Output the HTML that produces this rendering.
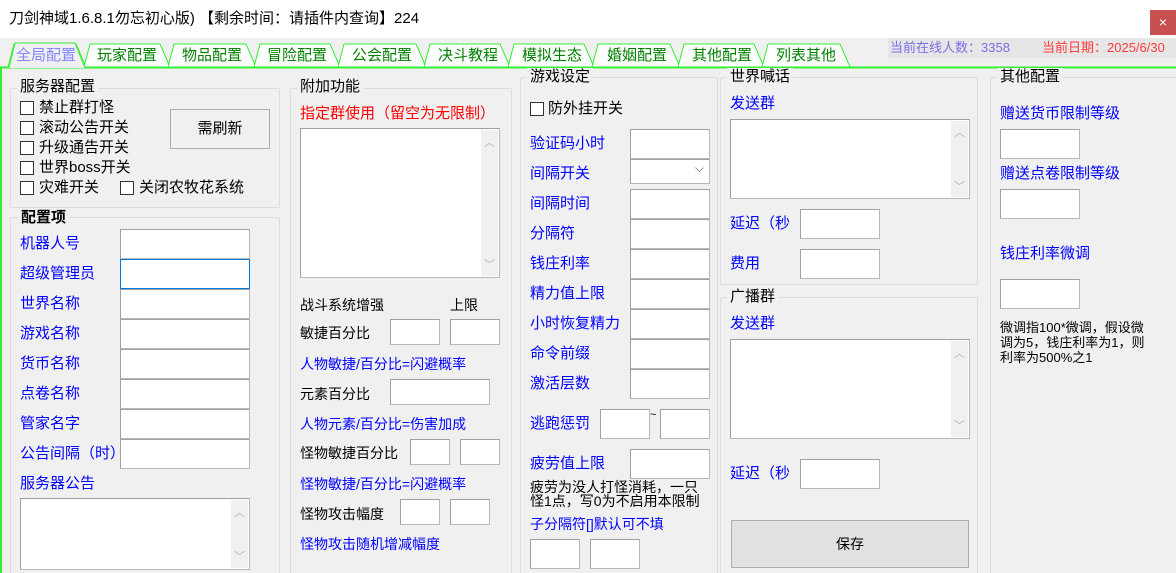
<!DOCTYPE html>
<html style="overflow:hidden"><head><meta charset="utf-8"><style>
*{margin:0;padding:0;box-sizing:border-box}
html,body{width:1176px;height:573px;overflow:hidden}
body{background:#f0f0f0;position:relative;font-family:"Liberation Sans","Noto Sans CJK SC","WenQuanYi Zen Hei",sans-serif;font-size:15px;color:#000}
.a{position:absolute;white-space:nowrap;line-height:18px}
.b{color:#0000ff}
.r{color:#ff0000}
.i{position:absolute;background:#fff;border:1px solid #a0a0a0;border-right-color:#b8b8b8;border-bottom-color:#b8b8b8}
.g{position:absolute;border:1px solid #dcdcdc;border-radius:2px}
.gt{position:absolute;background:#f0f0f0;padding:0 3px;line-height:18px;white-space:nowrap}
.cb{position:absolute;width:14px;height:14px;border:1px solid #333;background:#fff}
.sb{position:absolute;top:1px;right:1px;bottom:1px;width:17px;background:#f0f0f0;color:#b0b0b0;font-size:11px;text-align:center}
.sb span{position:absolute;left:0;right:0}
</style></head><body>
<div style="position:absolute;left:0;top:0;width:1176px;height:38px;background:#fff"></div>
<div class="a" style="left:9px;top:10px;font-size:15px">刀剑神域1.6.8.1勿忘初心版) 【剩余时间：请插件内查询】224</div>
<div style="position:absolute;left:1150px;top:10px;width:26px;height:25px;background:#c75050;color:#fff;font-size:14px;text-align:center;line-height:25px">×</div>
<div style="position:absolute;left:888px;top:38px;width:288px;height:20px;background:#e6e6e6"></div>
<div class="a" style="left:890px;top:39px;font-size:13px;color:#7a6fe6">当前在线人数：3358</div>
<div class="a" style="left:1042px;top:39px;font-size:13px;color:#ff3b3b">当前日期：2025/6/30</div>
<svg style="position:absolute;left:0;top:40px" width="1176" height="30">
<g fill="#fff" stroke="#33ee33" stroke-width="1">
<polygon points="8,27 14,4 76,4 86,27"/>
<polygon points="84,27 90,4 160,4 170,27"/>
<polygon points="168,27 174,4 246,4 256,27"/>
<polygon points="254,27 260,4 330,4 340,27"/>
<polygon points="338,27 344,4 416,4 426,27"/>
<polygon points="424,27 430,4 500,4 510,27"/>
<polygon points="508,27 514,4 584,4 594,27"/>
<polygon points="592,27 598,4 670,4 680,27"/>
<polygon points="678,27 684,4 754,4 764,27"/>
<polygon points="762,27 768,4 840,4 850,27"/>
</g>
<line x1="0" y1="27.5" x2="1176" y2="27.5" stroke="#33ee33" stroke-width="2"/>
<polygon points="9,28 15,3 75,3 85,28" fill="#f0f0f0"/>
<polyline points="1,28 9,28 15,3 75,3 85,28" fill="none" stroke="#33ee33"/>
</svg>
<div style="position:absolute;left:0;top:67px;width:2px;height:506px;background:#33ee33"></div>
<div class="a" style="left:16px;top:47px;color:#8585ff">全局配置</div>
<div class="a" style="left:97px;top:47px;color:#008000">玩家配置</div>
<div class="a" style="left:182px;top:47px;color:#008000">物品配置</div>
<div class="a" style="left:267px;top:47px;color:#008000">冒险配置</div>
<div class="a" style="left:352px;top:47px;color:#008000">公会配置</div>
<div class="a" style="left:438px;top:47px;color:#008000">决斗教程</div>
<div class="a" style="left:522px;top:47px;color:#008000">模拟生态</div>
<div class="a" style="left:607px;top:47px;color:#008000">婚姻配置</div>
<div class="a" style="left:692px;top:47px;color:#008000">其他配置</div>
<div class="a" style="left:776px;top:47px;color:#008000">列表其他</div>

<div class="g" style="left:10px;top:88px;width:270px;height:120px"></div>
<div class="gt" style="left:17px;top:78px">服务器配置</div>
<div class="g" style="left:10px;top:217px;width:270px;height:360px"></div>
<div class="gt" style="left:18px;top:209px;font-weight:bold">配置项</div>
<div class="g" style="left:290px;top:88px;width:222px;height:490px"></div>
<div class="gt" style="left:297px;top:78px">附加功能</div>
<div class="g" style="left:520px;top:77px;width:198px;height:500px"></div>
<div class="gt" style="left:527px;top:68px">游戏设定</div>
<div class="g" style="left:720px;top:77px;width:258px;height:208px"></div>
<div class="gt" style="left:727px;top:68px">世界喊话</div>
<div class="g" style="left:720px;top:297px;width:258px;height:280px"></div>
<div class="gt" style="left:727px;top:288px">广播群</div>
<div class="g" style="left:990px;top:77px;width:200px;height:500px"></div>
<div class="gt" style="left:997px;top:68px">其他配置</div>

<div class="cb" style="left:20px;top:101px"></div><div class="a" style="left:39px;top:99px">禁止群打怪</div>
<div class="cb" style="left:20px;top:121px"></div><div class="a" style="left:39px;top:119px">滚动公告开关</div>
<div class="cb" style="left:20px;top:141px"></div><div class="a" style="left:39px;top:139px">升级通告开关</div>
<div class="cb" style="left:20px;top:161px"></div><div class="a" style="left:39px;top:159px">世界boss开关</div>
<div class="cb" style="left:20px;top:181px"></div><div class="a" style="left:39px;top:179px">灾难开关</div>
<div class="cb" style="left:120px;top:181px"></div><div class="a" style="left:139px;top:179px">关闭农牧花系统</div>
<div style="position:absolute;left:170px;top:109px;width:100px;height:40px;border:1px solid #adadad;background:#f0f0f0;text-align:center;line-height:38px">需刷新</div>

<div class="a b" style="left:20px;top:235px">机器人号</div><div class="i" style="left:120px;top:229px;width:130px;height:30px"></div>
<div class="a b" style="left:20px;top:265px">超级管理员</div><div class="i" style="left:120px;top:259px;width:130px;height:30px;border-color:#0078d7"></div>
<div class="a b" style="left:20px;top:295px">世界名称</div><div class="i" style="left:120px;top:289px;width:130px;height:30px"></div>
<div class="a b" style="left:20px;top:325px">游戏名称</div><div class="i" style="left:120px;top:319px;width:130px;height:30px"></div>
<div class="a b" style="left:20px;top:355px">货币名称</div><div class="i" style="left:120px;top:349px;width:130px;height:30px"></div>
<div class="a b" style="left:20px;top:385px">点卷名称</div><div class="i" style="left:120px;top:379px;width:130px;height:30px"></div>
<div class="a b" style="left:20px;top:415px">管家名字</div><div class="i" style="left:120px;top:409px;width:130px;height:30px"></div>
<div class="a b" style="left:20px;top:445px">公告间隔（时）</div><div class="i" style="left:120px;top:439px;width:130px;height:30px"></div>
<div class="a b" style="left:20px;top:475px">服务器公告</div>
<div class="i" style="left:20px;top:498px;width:230px;height:72px"><div class="sb"><span style="top:4px">︿</span><span style="bottom:4px">﹀</span></div></div>

<div class="a r" style="left:300px;top:105px">指定群使用（留空为无限制）</div>
<div class="i" style="left:300px;top:128px;width:200px;height:150px"><div class="sb"><span style="top:4px">︿</span><span style="bottom:4px">﹀</span></div></div>
<div class="a" style="left:300px;top:296px;font-size:14px">战斗系统增强</div>
<div class="a" style="left:450px;top:296px;font-size:14px">上限</div>
<div class="a" style="left:300px;top:324px;font-size:14px">敏捷百分比</div>
<div class="i" style="left:390px;top:319px;width:50px;height:26px"></div><div class="i" style="left:450px;top:319px;width:50px;height:26px"></div>
<div class="a b" style="left:300px;top:355px;font-size:14px">人物敏捷/百分比=闪避概率</div>
<div class="a" style="left:300px;top:385px;font-size:14px">元素百分比</div>
<div class="i" style="left:390px;top:379px;width:100px;height:26px"></div>
<div class="a b" style="left:300px;top:415px;font-size:14px">人物元素/百分比=伤害加成</div>
<div class="a" style="left:300px;top:444px;font-size:14px">怪物敏捷百分比</div>
<div class="i" style="left:410px;top:439px;width:40px;height:26px"></div><div class="i" style="left:460px;top:439px;width:40px;height:26px"></div>
<div class="a b" style="left:300px;top:475px;font-size:14px">怪物敏捷/百分比=闪避概率</div>
<div class="a" style="left:300px;top:505px;font-size:14px">怪物攻击幅度</div>
<div class="i" style="left:400px;top:499px;width:40px;height:26px"></div><div class="i" style="left:450px;top:499px;width:40px;height:26px"></div>
<div class="a b" style="left:300px;top:535px;font-size:14px">怪物攻击随机增减幅度</div>

<div class="cb" style="left:530px;top:102px"></div><div class="a" style="left:548px;top:100px">防外挂开关</div>
<div class="a b" style="left:530px;top:135px">验证码小时</div><div class="i" style="left:630px;top:129px;width:80px;height:30px"></div>
<div class="a b" style="left:530px;top:165px">间隔开关</div><div class="i" style="left:630px;top:159px;width:80px;height:25px"><span style="position:absolute;right:5px;top:1px;font-size:12px;color:#555">⌵</span></div>
<div class="a b" style="left:530px;top:195px">间隔时间</div><div class="i" style="left:630px;top:189px;width:80px;height:30px"></div>
<div class="a b" style="left:530px;top:225px">分隔符</div><div class="i" style="left:630px;top:219px;width:80px;height:30px"></div>
<div class="a b" style="left:530px;top:255px">钱庄利率</div><div class="i" style="left:630px;top:249px;width:80px;height:30px"></div>
<div class="a b" style="left:530px;top:285px">精力值上限</div><div class="i" style="left:630px;top:279px;width:80px;height:30px"></div>
<div class="a b" style="left:530px;top:315px">小时恢复精力</div><div class="i" style="left:630px;top:309px;width:80px;height:30px"></div>
<div class="a b" style="left:530px;top:345px">命令前缀</div><div class="i" style="left:630px;top:339px;width:80px;height:30px"></div>
<div class="a b" style="left:530px;top:375px">激活层数</div><div class="i" style="left:630px;top:369px;width:80px;height:30px"></div>
<div class="a b" style="left:530px;top:415px">逃跑惩罚</div><div class="i" style="left:600px;top:409px;width:50px;height:30px"></div><div class="a" style="left:650px;top:406px;font-size:11px">~</div><div class="i" style="left:660px;top:409px;width:50px;height:30px"></div>
<div class="a b" style="left:530px;top:455px">疲劳值上限</div><div class="i" style="left:630px;top:449px;width:80px;height:30px"></div>
<div class="a" style="left:530px;top:480px;font-size:14px;line-height:14px">疲劳为没人打怪消耗，一只<br>怪1点，写0为不启用本限制</div>
<div class="a b" style="left:530px;top:515px;font-size:14px">子分隔符[]默认可不填</div>
<div class="i" style="left:530px;top:539px;width:50px;height:30px"></div><div class="i" style="left:590px;top:539px;width:50px;height:30px"></div>

<div class="a b" style="left:730px;top:95px">发送群</div>
<div class="i" style="left:730px;top:119px;width:240px;height:80px"><div class="sb"><span style="top:3px">︿</span><span style="bottom:3px">﹀</span></div></div>
<div class="a b" style="left:730px;top:215px">延迟（秒</div><div class="i" style="left:800px;top:209px;width:80px;height:30px"></div>
<div class="a b" style="left:730px;top:255px">费用</div><div class="i" style="left:800px;top:249px;width:80px;height:30px"></div>
<div class="a b" style="left:730px;top:315px">发送群</div>
<div class="i" style="left:730px;top:339px;width:240px;height:100px"><div class="sb"><span style="top:4px">︿</span><span style="bottom:4px">﹀</span></div></div>
<div class="a b" style="left:730px;top:465px">延迟（秒</div><div class="i" style="left:800px;top:459px;width:80px;height:30px"></div>
<div style="position:absolute;left:731px;top:520px;width:238px;height:48px;background:#e1e1e1;border:1px solid #adadad;text-align:center;line-height:46px;font-size:14px">保存</div>

<div class="a b" style="left:1000px;top:105px">赠送货币限制等级</div><div class="i" style="left:1000px;top:129px;width:80px;height:30px"></div>
<div class="a b" style="left:1000px;top:165px">赠送点卷限制等级</div><div class="i" style="left:1000px;top:189px;width:80px;height:30px"></div>
<div class="a b" style="left:1000px;top:245px">钱庄利率微调</div><div class="i" style="left:1000px;top:279px;width:80px;height:30px"></div>
<div class="a" style="left:1000px;top:320px;font-size:13px;line-height:15px">微调指100*微调，假设微<br>调为5，钱庄利率为1，则<br>利率为500%之1</div>
</body></html>
